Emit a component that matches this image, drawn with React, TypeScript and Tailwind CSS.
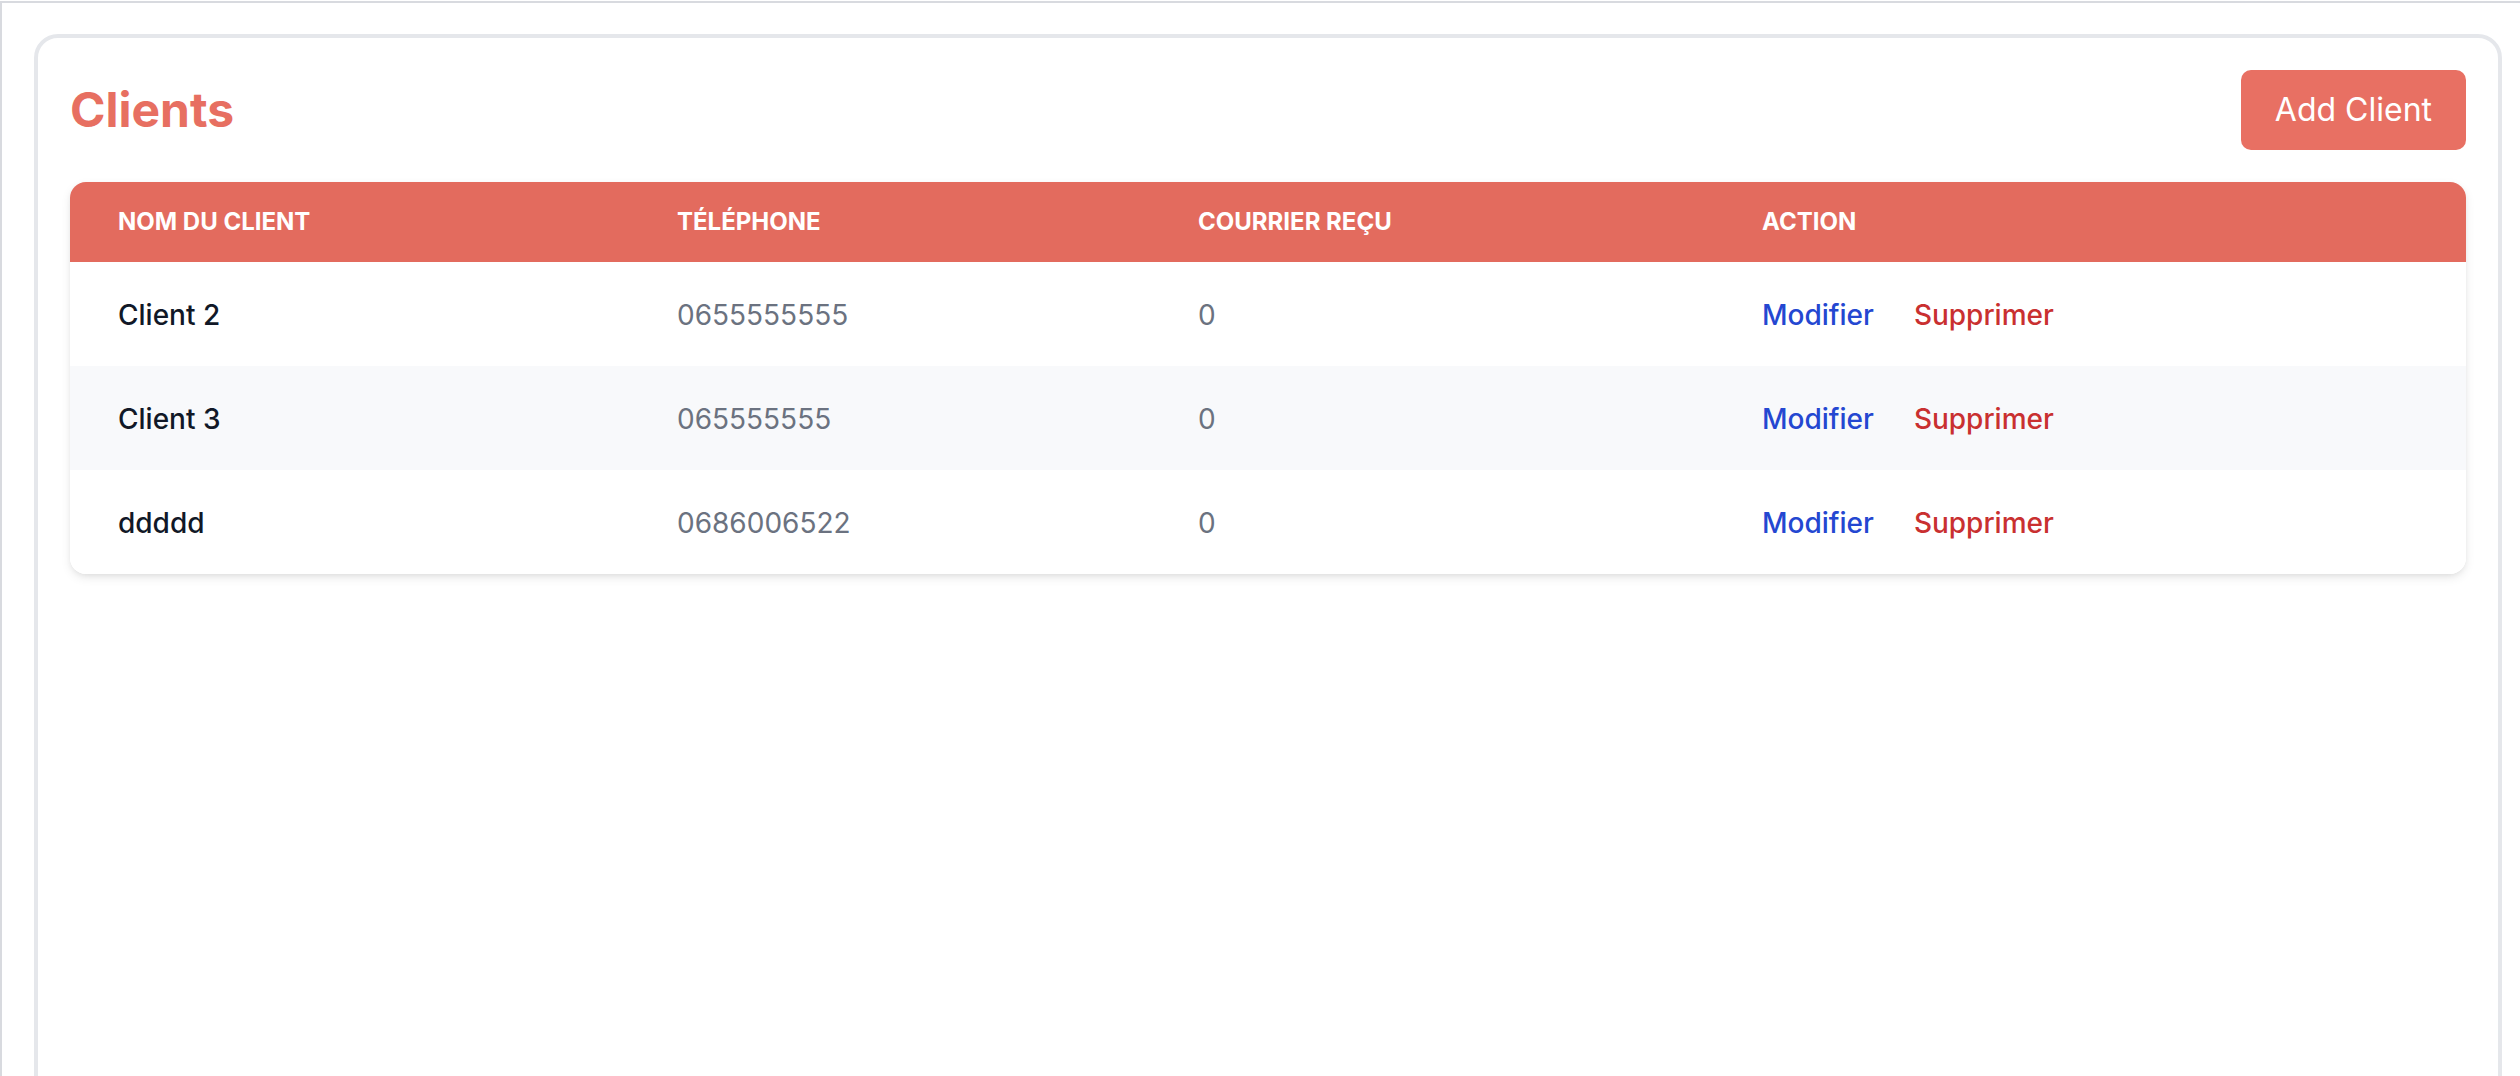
import React from "react";

const rows = [
  { name: "Client 2", phone: "0655555555", count: "0" },
  { name: "Client 3", phone: "065555555", count: "0" },
  { name: "ddddd", phone: "0686006522", count: "0" },
];

export default function App() {
  return (
    <div
      className="h-[1076px] overflow-hidden bg-white"
      style={{ fontFamily: "Inter, 'Noto Sans', sans-serif" }}
    >
      <div className="mt-px min-h-[1075px] border-l-[2px] border-t-[2px] border-[#d8dadf] pl-8 pr-[18px] pt-[31px]">
        <div className="min-h-[1100px] rounded-[24px] border-4 border-[#e5e7eb] bg-white p-8">
          <div className="mb-8 flex items-center justify-between">
            <h1 className="text-[48px] font-bold leading-[64px] text-[#e76f61]">
              Clients
            </h1>
            <button className="h-[80px] rounded-[10px] bg-[#e87063] px-[34px] text-[32px] leading-[48px] text-white">
              Add Client
            </button>
          </div>
          <div className="overflow-hidden rounded-[16px] bg-white shadow-[0_4px_12px_-2px_rgba(0,0,0,0.12),0_2px_6px_-2px_rgba(0,0,0,0.08)]">
            <table className="w-full table-fixed border-collapse">
              <colgroup>
                <col className="w-[559px]" />
                <col className="w-[521px]" />
                <col className="w-[564px]" />
                <col />
              </colgroup>
              <thead>
                <tr className="bg-[#e36b5e]">
                  <th className="h-[80px] px-12 text-left text-[24px] font-bold uppercase leading-[32px] text-white">
                    Nom du client
                  </th>
                  <th className="px-12 text-left text-[24px] font-bold uppercase leading-[32px] text-white">
                    Téléphone
                  </th>
                  <th className="px-12 text-left text-[24px] font-bold uppercase leading-[32px] text-white">
                    Courrier reçu
                  </th>
                  <th className="px-12 text-left text-[24px] font-bold uppercase leading-[32px] text-white">
                    Action
                  </th>
                </tr>
              </thead>
              <tbody>
                {rows.map((r, i) => (
                  <tr
                    key={r.name}
                    className={i === 1 ? "bg-[#f8f9fb]" : "bg-white"}
                  >
                    <td className="h-[104px] px-12 pt-[2px] text-[28px] font-medium leading-[40px] text-[#111827]">
                      {r.name}
                    </td>
                    <td className="px-12 pt-[2px] text-[28px] leading-[40px] text-[#6b7280]">
                      {r.phone}
                    </td>
                    <td className="px-12 pt-[2px] text-[28px] leading-[40px] text-[#6b7280]">
                      {r.count}
                    </td>
                    <td className="px-12 pt-[2px] text-[28px] font-medium leading-[40px]">
                      <span className="text-[#2447d1]">Modifier</span>
                      <span className="ml-10 text-[#c93030]">Supprimer</span>
                    </td>
                  </tr>
                ))}
              </tbody>
            </table>
          </div>
        </div>
      </div>
    </div>
  );
}
